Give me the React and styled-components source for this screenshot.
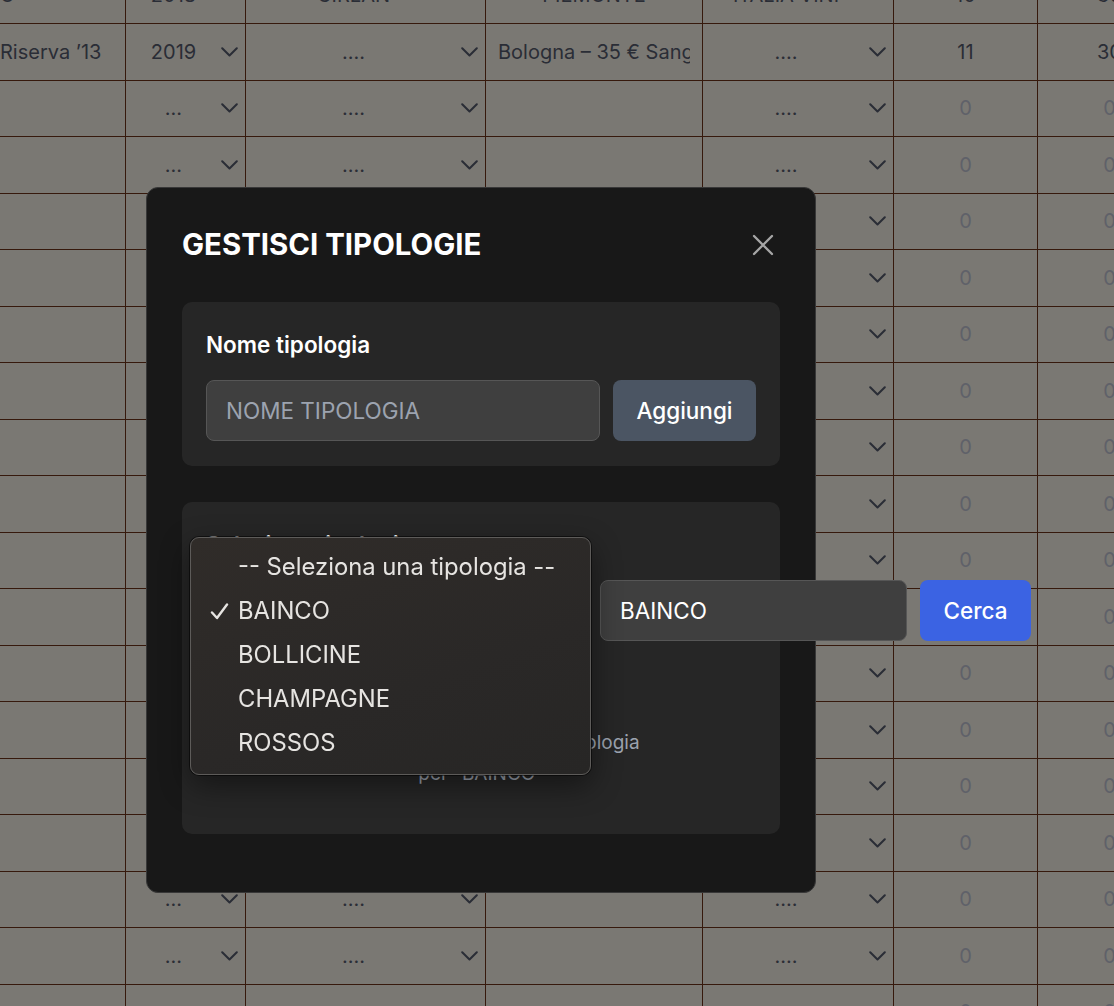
import React from 'react';
import styled, { createGlobalStyle } from 'styled-components';
import { Wine } from 'lucide-react';

const GlobalStyle = createGlobalStyle`
  html, body {
    margin: 0;
    padding: 0;
    background: #7a7873;
    font-family: Inter, "Noto Sans", sans-serif;
    overflow: hidden;
  }
`;

const COLUMNS = '204px 120px 240px 217px 191px 144px 144px';
const LINE = '#36190c';

const Page = styled.div`
  height: 100vh;
  overflow: hidden;
`;

const Table = styled.div`
  width: max-content;
  margin: -32.5px 0 0 -78px;
`;

const Row = styled.div`
  display: grid;
  grid-template-columns: ${COLUMNS};
  height: 56.5px;
  box-sizing: border-box;
  border-bottom: 1px solid ${LINE};
`;

const Cell = styled.div`
  display: flex;
  align-items: center;
  justify-content: ${(p) => p.$align || 'flex-start'};
  box-sizing: border-box;
  border-right: 1px solid ${LINE};
  padding: 0 12px;
  overflow: hidden;
  white-space: nowrap;
  font-size: 20px;
  color: ${(p) => (p.$muted ? '#5f6169' : '#2a2d36')};
`;

const Clip = styled.span`
  overflow: hidden;
  min-width: 0;
`;

const SelectCell = styled(Cell)`
  padding: 0 7px 0 0;
`;

const SelectText = styled.span`
  flex: 1;
  text-align: center;
`;

const Chevron = () => (
  <svg width="17" height="10" viewBox="0 0 17 10" fill="none">
    <path d="M1.2 1.2 L8.5 8.5 L15.8 1.2" stroke="#2a2d36" strokeWidth="2" strokeLinecap="round" strokeLinejoin="round" />
  </svg>
);

const rows = [
  { name: 'BAROLO', year: '2018', producer: 'CIRLAN', place: 'PIEMONTE', placeCenter: true, supplier: 'ITALIA VINI', qty: '10', price: '30' },
  { name: 'Barolo Riserva ’13', year: '2019', producer: '....', place: 'Bologna – 35 € Sangiovese di Romagna', supplier: '....', qty: '11', price: '30' },
  ...Array.from({ length: 17 }, () => ({ name: '', year: '...', producer: '....', place: '', supplier: '....', qty: '0', price: '0', empty: true })),
];

const Modal = styled.div`
  position: fixed;
  left: 146px;
  top: 187px;
  width: 670px;
  height: 706px;
  box-sizing: border-box;
  padding: 35px 35px;
  background: #181818;
  border: 1px solid #383838;
  border-radius: 12px;
  color: #fff;
`;

const Header = styled.div`
  display: flex;
  align-items: center;
  justify-content: space-between;
  height: 44px;
  margin-bottom: 35px;
`;

const Title = styled.h2`
  margin: 0;
  font-size: 29.4px;
  font-weight: 700;
  line-height: 1;
`;

const CloseButton = styled.button`
  display: flex;
  align-items: center;
  justify-content: center;
  width: 44px;
  height: 44px;
  margin-right: -5px;
  padding: 0;
  border: none;
  background: transparent;
  cursor: pointer;
`;

const Card = styled.div`
  position: relative;
  box-sizing: border-box;
  padding: 26px 24px 25px;
  background: #262626;
  border-radius: 10px;
  & + & {
    margin-top: 36px;
  }
`;

const Label = styled.div`
  height: 34px;
  line-height: 34px;
  margin-bottom: 18px;
  font-size: 22.5px;
  font-weight: 600;
  color: #fff;
`;

const FieldRow = styled.div`
  display: flex;
  gap: 13px;
  height: 61px;
`;

const Input = styled.input`
  box-sizing: border-box;
  flex: ${(p) => (p.$width ? `0 0 ${p.$width}px` : '1')};
  min-width: 0;
  height: 61px;
  padding: 0 19px;
  background: #3f3f3f;
  border: 1px solid #565656;
  border-radius: 8px;
  color: #fff;
  font-family: inherit;
  font-size: 22.5px;
  outline: none;
  &::placeholder {
    color: #9ca3af;
  }
`;

const Button = styled.button`
  flex: 0 0 ${(p) => p.$width}px;
  height: 61px;
  border: none;
  border-radius: 8px;
  background: ${(p) => (p.$primary ? '#3b63e3' : '#4b5563')};
  color: #fff;
  font-family: inherit;
  font-size: 22.5px;
  font-weight: 500;
  cursor: pointer;
`;

const EmptyState = styled.div`
  display: flex;
  flex-direction: column;
  align-items: center;
  padding: 24px 0 20px;
  color: #9ca3af;
  font-size: 19px;
  line-height: 31px;
`;

const EmptyIcon = styled.div`
  height: 40px;
  margin-bottom: 21.5px;
  color: #4b4b4b;
`;

const Popup = styled.div`
  position: absolute;
  left: 8px;
  top: 35px;
  width: 401px;
  box-sizing: border-box;
  padding: 7px 0 9px;
  background: linear-gradient(160deg, #302c29 0%, #2a2827 60%, #272625 100%);
  border: 1px solid #5d5b59;
  border-radius: 9px;
  box-shadow: 0 0 0 1px rgba(0, 0, 0, 0.55), 0 10px 30px rgba(0, 0, 0, 0.45);
`;

const Option = styled.div`
  position: relative;
  height: 44px;
  line-height: 44px;
  padding-left: 47px;
  font-size: 23.8px;
  color: #e6e4e1;
`;

const Check = styled.svg`
  position: absolute;
  left: 19px;
  top: 14px;
`;

const options = ['-- Seleziona una tipologia --', 'BAINCO', 'BOLLICINE', 'CHAMPAGNE', 'ROSSOS'];

const App = () => {
  return (
    <>
      <GlobalStyle />
      <Page>
        <Table>
          {rows.map((r, i) => (
            <Row key={i}>
              <Cell>{r.name}</Cell>
              <SelectCell>
                <SelectText>{r.year}</SelectText>
                <Chevron />
              </SelectCell>
              <SelectCell>
                <SelectText>{r.producer}</SelectText>
                <Chevron />
              </SelectCell>
              <Cell $align={r.placeCenter ? 'center' : 'flex-start'}>
                <Clip>{r.place}</Clip>
              </Cell>
              <SelectCell>
                <SelectText>{r.supplier}</SelectText>
                <Chevron />
              </SelectCell>
              <Cell $align="center" $muted={r.empty}>{r.qty}</Cell>
              <Cell $align="center" $muted={r.empty}>{r.price}</Cell>
            </Row>
          ))}
        </Table>
      </Page>

      <Modal>
        <Header>
          <Title>GESTISCI TIPOLOGIE</Title>
          <CloseButton aria-label="Chiudi">
            <svg width="22" height="22" viewBox="0 0 22 22" fill="none">
              <path d="M2 2 L20 20 M20 2 L2 20" stroke="#a6a6a6" strokeWidth="2.4" strokeLinecap="round" />
            </svg>
          </CloseButton>
        </Header>

        <Card>
          <Label>Nome tipologia</Label>
          <FieldRow>
            <Input placeholder="NOME TIPOLOGIA" />
            <Button $width={143}>Aggiungi</Button>
          </FieldRow>
        </Card>

        <Card>
          <Label>Seleziona tipologia</Label>
          <FieldRow>
            <Input $width={381} defaultValue="BAINCO" />
            <Input $width={307} defaultValue="BAINCO" />
            <Button $width={111} $primary>Cerca</Button>
          </FieldRow>
          <EmptyState>
            <EmptyIcon>
              <Wine size={40} strokeWidth={1.5} />
            </EmptyIcon>
            <div>Nessun vino trovato per la tipologia</div>
            <div>per “BAINCO”</div>
          </EmptyState>

          <Popup>
            {options.map((o, i) => (
              <Option key={o}>
                {i === 1 && (
                  <Check width="19" height="17" viewBox="0 0 19 17" fill="none">
                    <path d="M2 9.5 L7 15 L17 1.5" stroke="#e6e4e1" strokeWidth="2.4" strokeLinecap="round" strokeLinejoin="round" />
                  </Check>
                )}
                {o}
              </Option>
            ))}
          </Popup>
        </Card>
      </Modal>
    </>
  );
};

export default App;
